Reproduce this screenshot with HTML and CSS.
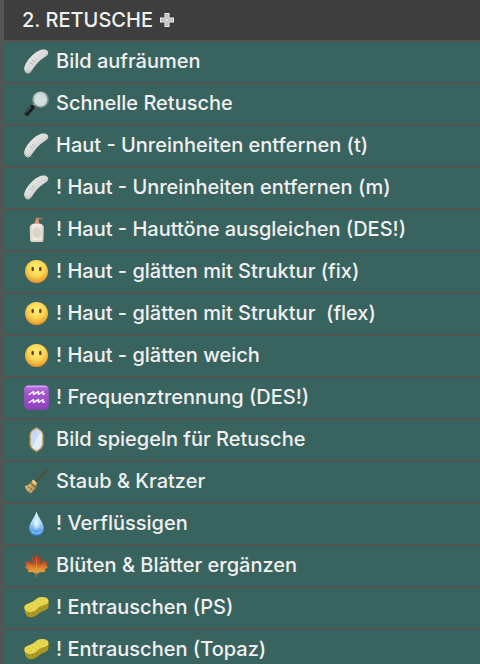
FILE: index.html
```html
<!DOCTYPE html>
<html lang="de">
<head>
<meta charset="utf-8">
<meta name="viewport" content="width=device-width, initial-scale=1">
<title>Retusche</title>
<link rel="stylesheet" href="styles.css">
</head>
<body>
<svg class="sprite" aria-hidden="true">
  <defs>
    <linearGradient id="g-band" x1="0" y1="0" x2="1" y2="1"><stop offset="0" stop-color="#f4f4f4"/><stop offset="1" stop-color="#bfbfbd"/></linearGradient>
    <linearGradient id="g-handle" x1="0" y1="0" x2="1" y2="1"><stop offset="0" stop-color="#555"/><stop offset=".5" stop-color="#151515"/><stop offset="1" stop-color="#333"/></linearGradient>
    <linearGradient id="g-bottle" x1="0" x2="1"><stop offset="0" stop-color="#d8cec3"/><stop offset=".3" stop-color="#f3ece4"/><stop offset=".8" stop-color="#eee6de"/><stop offset="1" stop-color="#c9beb2"/></linearGradient>
    <radialGradient id="g-face" cx=".5" cy=".35" r=".65"><stop offset="0" stop-color="#fff07a"/><stop offset=".55" stop-color="#f9d552"/><stop offset=".85" stop-color="#eeaa36"/><stop offset="1" stop-color="#d98a28"/></radialGradient>
    <linearGradient id="g-sign" x1="0" y1="0" x2="0" y2="1"><stop offset="0" stop-color="#c07fe0"/><stop offset=".25" stop-color="#a558d0"/><stop offset="1" stop-color="#8d3fbd"/></linearGradient>
    <linearGradient id="g-glass" x1="0" y1="0" x2="1" y2="1"><stop offset="0" stop-color="#c0d3f2"/><stop offset=".48" stop-color="#c9daf5"/><stop offset=".52" stop-color="#e7f0fc"/><stop offset="1" stop-color="#d5e3f8"/></linearGradient>
    <linearGradient id="g-broom" x1="0" y1="0" x2="1" y2="1"><stop offset="0" stop-color="#d9bb70"/><stop offset=".5" stop-color="#cda95d"/><stop offset="1" stop-color="#80602c"/></linearGradient>
    <linearGradient id="g-drop" x1="0" y1="0" x2="0" y2="1"><stop offset="0" stop-color="#e9f7ff"/><stop offset=".45" stop-color="#a8dafa"/><stop offset="1" stop-color="#3583dc"/></linearGradient>
    <radialGradient id="g-shine" cx=".5" cy=".6" r=".5"><stop offset="0" stop-color="#fff" stop-opacity=".85"/><stop offset="1" stop-color="#fff" stop-opacity="0"/></radialGradient>
    <linearGradient id="g-leaf" x1="0" y1="0" x2="0" y2="1"><stop offset="0" stop-color="#a83220"/><stop offset=".45" stop-color="#c04a22"/><stop offset=".75" stop-color="#df912f"/><stop offset="1" stop-color="#d9a545"/></linearGradient>
  </defs>
  <symbol id="bandage" viewBox="0 0 25 25">
    <path d="M.3 18.500C1.500 12.500 10 3 17 .8C19.500 0 23 .3 24 2.500C25 5 23 6.800 20.500 8.300C15 11.500 11 16.500 7.500 22C6 24.700 3.500 25 1.800 23.500C.4 22.200 0 20.500.3 18.500Z" fill="url(#g-band)"/>
    <path d="M6 13.500l3 2M8 11l3 2" stroke="#a0a09e" stroke-width=".6"/>
    <path d="M1 21C3 24 5 24 7.500 21" stroke="#979a98" stroke-width=".7" fill="none"/>
  </symbol>
  <symbol id="magnifier" viewBox="0 0 25 25">
    <path d="M11 13.500L8 16.500" stroke="#b8bec0" stroke-width="2.500"/>
    <path d="M8.500 16L3 22.500" stroke="#1b1b1c" stroke-width="4.400" stroke-linecap="round"/>
    <path d="M7 16L2 21.800" stroke="#858789" stroke-width=".8"/>
    <circle cx="16.500" cy="8.600" r="7.700" fill="#c7d7d7" stroke="#7e8b90" stroke-width="1.500"/>
    <path d="M10 6A7 7 0 0 1 22 4" stroke="#dbe4e5" stroke-width=".8" fill="none"/>
    <circle cx="16.500" cy="9" r="5.500" fill="#d2dfde"/>
  </symbol>
  <symbol id="lotion" viewBox="0 0 25 25">
    <path d="M11 7.500V5L12 2V.8L18.500 1.200L18.300 2.200H14.500L15 5V7.500Z" fill="#d99a7b"/>
    <path d="M12 1L18.500 1.300" stroke="#9d6e59" stroke-width=".8"/>
    <path d="M10.500 6.500H15.200C18.500 7 19.800 8.500 19.900 11L19.500 23C19.400 25 18.500 25 17 25H8.500C7 25 6.200 24.500 6.100 23L5.700 11C5.800 8.500 7 7 10.500 6.500Z" fill="url(#g-bottle)"/>
    <ellipse cx="12.900" cy="15.500" rx="4.300" ry="5.500" fill="#ddd2c9"/>
    <path d="M7 24H18.500" stroke="#c0b5a8" stroke-width=".8"/>
    <path d="M10.500 6.500L11 4.500H15L15.300 6.500Z" fill="#df936e"/>
  </symbol>
  <symbol id="face" viewBox="0 0 25 25">
    <circle cx="12.500" cy="12.500" r="11.500" fill="url(#g-face)"/>
    <ellipse cx="8.700" cy="10" rx="1.300" ry="2.200" fill="#6a431c"/>
    <ellipse cx="16.300" cy="10" rx="1.300" ry="2.200" fill="#6a431c"/>
  </symbol>
  <symbol id="aquarius" viewBox="0 0 25 25">
    <rect x=".2" y=".2" width="24.600" height="24.600" rx="4.500" fill="url(#g-sign)"/>
    <path d="M3 1.500H22" stroke="#d9a7ee" stroke-width="1" stroke-linecap="round"/>
    <path d="M5 9.500L9.500 6.500L9.500 9.500L14.500 6.500L14.500 9.500L19 6.500L19 9.300L20.500 9M5 17.500L9.500 14.500L9.500 17.500L14.500 14.500L14.500 17.500L19 14.500L19 17.300L20.500 17" fill="none" stroke="#fbf3ff" stroke-width="1.500" stroke-linejoin="round" stroke-linecap="round"/>
  </symbol>
  <symbol id="mirror" viewBox="0 0 25 25">
    <path d="M12.500.7L14.300 2C17 3 18.800 6 19 9L18.800 12.500L19 16C18.800 19 17 22 14.300 23.200L12.500 24.400L10.700 23.200C8 22 6.200 19 6 16L6.200 12.500L6 9C6.200 6 8 3 10.700 2Z" fill="url(#g-glass)" stroke="#c19c55" stroke-width="1.300"/>
  </symbol>
  <symbol id="broom" viewBox="0 0 25 25">
    <path d="M10.500 13.500L24 .8" stroke="#60472b" stroke-width="1.500" stroke-linecap="round"/>
    <path d="M9 11L12.600 14.800C13 18 11 21.500 7 24.600C3.500 23 1.500 20.500.7 17C4 16 6.500 14.500 9 11Z" fill="url(#g-broom)"/>
    <path d="M8.700 11.200L12.300 15" stroke="#e8d58f" stroke-width="2.200"/>
    <path d="M6.500 13.800C8 15.500 9.500 17 11.600 18M3.500 16.300C5.500 19 7.500 21 9.500 21.800" stroke="#755c35" stroke-width="1.100" fill="none"/>
    <path d="M2 18L6 17M4 21L7 18.500M6.500 23.500L9 19.500" stroke="#efdaa0" stroke-width=".7"/>
  </symbol>
  <symbol id="drop" viewBox="0 0 25 25">
    <path d="M12.500.4C14 6 19.700 11.500 19.700 17.300C19.700 21.800 16.500 24.700 12.500 24.700S5.300 21.800 5.300 17.300C5.300 11.500 11 6 12.500.4Z" fill="url(#g-drop)"/>
    <ellipse cx="12.500" cy="11.500" rx="4.300" ry="7.500" fill="url(#g-shine)"/>
    <path d="M8.500 21Q12.500 24 16.500 21" stroke="#7cc2f6" stroke-width="1.500" fill="none" stroke-linecap="round"/>
  </symbol>
  <symbol id="leaf" viewBox="0 0 25 25">
    <path d="M12.500.7L14.700 4.800L17 4L16.300 11L20 7L20.800 9L24 8.500L22.500 12L24 14L20.500 17L21.700 19L16 19.200L13 21L12.500 20L12 21L9 19.200L3.300 19L4.500 17L1 14L2.500 12L1 8.500L4.200 9L5 7L8.700 11L8 4L10.300 4.800Z" fill="url(#g-leaf)"/>
    <path d="M12.500 19V4M12.500 19L3 10M12.500 19L22 10M12.500 19L5 18M12.500 19L20 18" stroke="#e8a94a" stroke-opacity=".65" stroke-width=".6"/>
    <path d="M12.500 19Q12.700 22.500 11.300 24.500" stroke="#b87835" stroke-width="1" fill="none"/>
  </symbol>
  <symbol id="sponge" viewBox="0 0 25 25">
    <path d="M.4 12.500C.8 8.500 7 8.500 10.500 5.500C14 2 18 1.500 21.500 2.700C24 3.500 24.900 5.500 24.600 8L24.300 12C23.500 15.500 19 15.300 15.500 18C12.500 20.500 9.500 23 5.500 22C2.500 21.500.8 18.500.4 12.500Z" fill="#ad9a22"/>
    <path d="M.4 12C.8 8.500 7 8.500 10.500 5.500C14 2 18 1.300 21.500 2.500C24.500 3.500 25.500 7 23 8.700C20 10.500 17 10 14 13C11 16 7.500 18 4 16.700C1.500 15.700.2 14 .4 12Z" fill="#e6d850"/>
    <path d="M4 12h1M7 14h1M8 10h1M11 12h1M12 7h1M15 9h1M16 5h1M19 7h1M20 4h1M5 15h1" stroke="#c3b432" stroke-width="1"/>
    <path d="M4 19h1M8 18h1M10 20h1M13 17h1M17 14h1M20 12h1" stroke="#82741b" stroke-width="1"/>
  </symbol>
</svg>
<main class="panel">
  <h1 class="panel-title">2. RETUSCHE
    <svg class="cross" viewBox="0 0 16 16" aria-hidden="true">
      <path d="M5.500 1H10.500V5.500H15V10.500H10.500V15H5.500V10.500H1V5.500H5.500Z" fill="#f0f0f0"/>
      <path d="M7 2.500H9V7H13.500V9H9V13.500H7V9H2.500V7H7Z" fill="#dedede" stroke="#8a8a8a" stroke-width=".6"/>
    </svg>
  </h1>
  <ul class="actions">
    <li><button class="action" type="button"><svg class="icon" aria-hidden="true"><use href="#bandage"/></svg>Bild aufräumen</button></li>
    <li><button class="action" type="button"><svg class="icon" aria-hidden="true"><use href="#magnifier"/></svg>Schnelle Retusche</button></li>
    <li><button class="action" type="button"><svg class="icon" aria-hidden="true"><use href="#bandage"/></svg>Haut - Unreinheiten entfernen (t)</button></li>
    <li><button class="action" type="button"><svg class="icon" aria-hidden="true"><use href="#bandage"/></svg>! Haut - Unreinheiten entfernen (m)</button></li>
    <li><button class="action" type="button"><svg class="icon" aria-hidden="true"><use href="#lotion"/></svg>! Haut - Hauttöne ausgleichen (DES!)</button></li>
    <li><button class="action" type="button"><svg class="icon" aria-hidden="true"><use href="#face"/></svg>! Haut - glätten mit Struktur (fix)</button></li>
    <li><button class="action" type="button"><svg class="icon" aria-hidden="true"><use href="#face"/></svg>! Haut - glätten mit Struktur  (flex)</button></li>
    <li><button class="action" type="button"><svg class="icon" aria-hidden="true"><use href="#face"/></svg>! Haut - glätten weich</button></li>
    <li><button class="action" type="button"><svg class="icon" aria-hidden="true"><use href="#aquarius"/></svg>! Frequenztrennung (DES!)</button></li>
    <li><button class="action" type="button"><svg class="icon" aria-hidden="true"><use href="#mirror"/></svg>Bild spiegeln für Retusche</button></li>
    <li><button class="action" type="button"><svg class="icon" aria-hidden="true"><use href="#broom"/></svg>Staub &amp; Kratzer</button></li>
    <li><button class="action" type="button"><svg class="icon" aria-hidden="true"><use href="#drop"/></svg>! Verflüssigen</button></li>
    <li><button class="action" type="button"><svg class="icon" aria-hidden="true"><use href="#leaf"/></svg>Blüten &amp; Blätter ergänzen</button></li>
    <li><button class="action" type="button"><svg class="icon" aria-hidden="true"><use href="#sponge"/></svg>! Entrauschen (PS)</button></li>
    <li><button class="action" type="button"><svg class="icon" aria-hidden="true"><use href="#sponge"/></svg>! Entrauschen (Topaz)</button></li>
  </ul>
</main>
</body>
</html>
```
FILE: styles.css
```css
* {
  box-sizing: border-box;
}

body {
  margin: 0;
  background: #545454;
  color: #f0f0f0;
  font-family: Inter, "Liberation Sans", sans-serif;
}

.sprite {
  position: absolute;
  width: 0;
  height: 0;
}

.panel {
  padding-left: 4px;
}

.panel-title {
  display: flex;
  align-items: center;
  gap: 6px;
  height: 40px;
  margin: 0;
  padding: 0 18px;
  background: #3e3e3e;
  font-size: 20px;
  font-weight: 500;
  line-height: 24px;
}

.cross {
  width: 16px;
  height: 16px;
}

.actions {
  margin: 0;
  padding: 0;
  list-style: none;
}

.action {
  display: flex;
  align-items: center;
  gap: 7px;
  width: 100%;
  height: 42px;
  padding: 0 20px 2px;
  border: 0;
  border-top: 2px solid #565251;
  background: #39635f;
  color: inherit;
  font: inherit;
  font-size: 20px;
  font-weight: 500;
  line-height: 24px;
  text-align: left;
  white-space: pre;
}

.icon {
  flex: none;
  width: 25px;
  height: 25px;
}
```
